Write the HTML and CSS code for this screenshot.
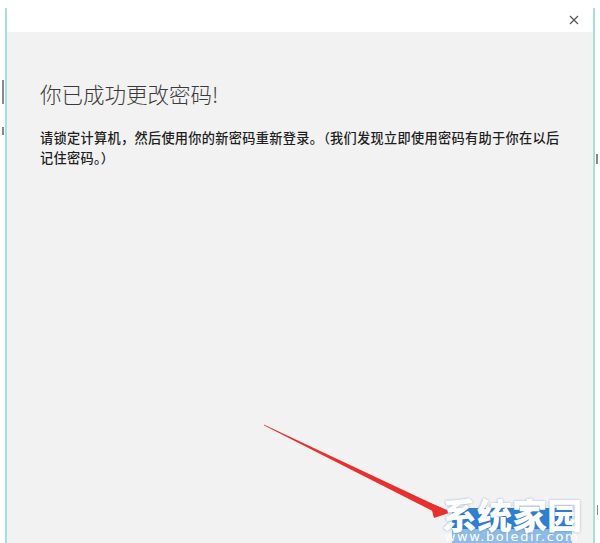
FILE: index.html
```html
<!DOCTYPE html>
<html lang="zh-CN">
<head>
    <meta charset="UTF-8">
    <title>更改密码</title>
    <link rel="stylesheet" href="styles.css">
</head>
<body>
    <div class="window">
        <!-- Title bar -->
        <div class="titlebar">
            <span class="close">
                <svg width="10" height="10" viewBox="0 0 10 10">
                    <path d="M1 1 L9 9 M9 1 L1 9" stroke="#555" stroke-width="1.2" fill="none"/>
                </svg>
            </span>
        </div>

        <div class="content">
            <h1 class="title">你已成功更改密码!</h1>
            <p class="message">请锁定计算机，然后使用你的新密码重新登录。（我们发现立即使用密码有助于你在以后<br>记住密码。）</p>
        </div>

        <!-- Finish button, mostly under the watermark -->
        <div class="finish"></div>
    </div>

    <!-- Bits of the window behind -->
    <span class="mark mark-a"></span>
    <span class="mark mark-b"></span>
    <span class="mark mark-c"></span>
    <span class="mark mark-d"></span>

    <!-- Red pointer arrow -->
    <svg class="arrow" width="600" height="543" viewBox="0 0 600 543">
        <polygon points="263.8,424.5 264.2,425.5 438.5,514 441.5,508" fill="#e8302e"/>
        <polygon points="430,503 452,512 434,518" fill="#e8302e"/>
    </svg>

    <!-- Watermark -->
    <div class="watermark">
        <div class="wm-title">系统家园</div>
        <div class="wm-url">www.boledir.com</div>
    </div>
</body>
</html>
```

FILE: styles.css
```css
body {
    margin: 0;
    background-color: #fff;
    font-family: "Noto Sans CJK SC", "Noto Sans", sans-serif;
    overflow: hidden;
}
.window {
    position: relative;
    margin: 8px 0 0 5px;
    width: 586px;
    height: 560px;
    border-left: 2px solid #a8dfdf;
    border-right: 2px solid #a8dfdf;
    background-color: #f2f2f2;
}
.titlebar {
    height: 24px;
    background-color: #fff;
    display: flex;
    justify-content: flex-end;
    align-items: center;
    padding-right: 14px;
}
.close {
    display: flex;
}
.content {
    padding: 47px 20px 0 33px;
}
.title {
    margin: 0;
    font-size: 21.5px;
    font-weight: 300;
    line-height: 30px;
    color: #3a3a3a;
}
.message {
    margin: 19px 0 0;
    font-size: 13.2px;
    line-height: 20px;
    color: #1e1e1e;
    font-weight: 500;
    letter-spacing: 0.3px;
    white-space: nowrap;
}
.finish {
    position: absolute;
    left: 445px;
    top: 500px;
    width: 120px;
    height: 36px;
    background: linear-gradient(#2f7fd2 0, #2f7fd2 21px, #8fbbe6 21px);
}
.mark {
    position: absolute;
    width: 2px;
    background-color: #8a8a8a;
}
.mark-a { left: 2px; top: 80px; height: 24px; }
.mark-b { left: 2px; top: 127px; height: 8px; }
.mark-c { left: 596px; top: 154px; height: 10px; }
.mark-d { left: 597px; top: 505px; height: 10px; width: 1px; }
.arrow {
    position: absolute;
    left: 0;
    top: 0;
}
.watermark {
    position: absolute;
    left: 430px;
    top: 496px;
    width: 164px;
    text-align: center;
    color: #fff;
}
.wm-title {
    font-size: 35px;
    font-weight: 900;
    line-height: 35px;
    height: 35px;
    text-shadow: 0 0 2px rgba(40, 110, 190, 0.6);
}
.wm-url {
    font-family: "DejaVu Sans", sans-serif;
    font-size: 13px;
    line-height: 12px;
    letter-spacing: 1.6px;
}
```
